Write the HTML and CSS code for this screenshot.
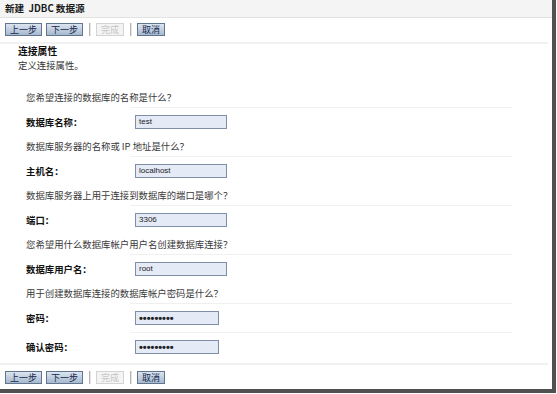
FILE: index.html
```html
<!DOCTYPE html>
<html lang="zh-CN">
<head>
<meta charset="utf-8">
<title>新建 JDBC 数据源</title>
<link rel="stylesheet" href="styles.css">
</head>
<body>
<div class="window">
  <div class="titlebar">新建&nbsp; JDBC 数据源</div>
  <div class="toolbar">
    <span class="btn">上一步</span>
    <span class="btn">下一步</span>
    <span class="sep"></span>
    <span class="btn disabled">完成</span>
    <span class="sep"></span>
    <span class="btn">取消</span>
  </div>
  <div class="section">
    <div class="heading">连接属性</div>
    <div class="desc">定义连接属性。</div>
  </div>
  <div class="form">
    <div class="q">您希望连接的数据库的名称是什么？</div>
    <div class="field"><span class="label">数据库名称：</span><span class="input">test</span></div>
    <div class="q">数据库服务器的名称或 IP 地址是什么？</div>
    <div class="field"><span class="label">主机名：</span><span class="input">localhost</span></div>
    <div class="q">数据库服务器上用于连接到数据库的端口是哪个？</div>
    <div class="field"><span class="label">端口：</span><span class="input">3306</span></div>
    <div class="q">您希望用什么数据库帐户用户名创建数据库连接？</div>
    <div class="field"><span class="label">数据库用户名：</span><span class="input">root</span></div>
    <div class="q">用于创建数据库连接的数据库帐户密码是什么？</div>
    <div class="field"><span class="label">密码：</span><span class="input pw">•••••••••</span></div>
    <div class="field last"><span class="label">确认密码：</span><span class="input pw">•••••••••</span></div>
  </div>
  <div class="toolbar bottom">
    <span class="btn">上一步</span>
    <span class="btn">下一步</span>
    <span class="sep"></span>
    <span class="btn disabled">完成</span>
    <span class="sep"></span>
    <span class="btn">取消</span>
  </div>
</div>
</body>
</html>
```
FILE: styles.css
```css
* { box-sizing: border-box; margin: 0; padding: 0; }
html, body { background: #fff; }
body {
  font-family: "Noto Sans CJK SC", "Noto Sans", sans-serif;
  font-size: 9.4px;
  color: #333;
}
.window {
  width: 556px;
  height: 393px;
  border-right: 4px solid #505050;
  border-bottom: 4px solid #505050;
  background: #fff;
  display: flex;
  flex-direction: column;
}
.titlebar {
  height: 18px;
  line-height: 17px;
  padding-left: 5px;
  background: #f4f4f4;
  border-bottom: 1px solid #e2e2e2;
  font-weight: bold;
  font-size: 9.6px;
  color: #1a1a1a;
  white-space: pre;
}
.toolbar {
  display: flex;
  align-items: flex-start;
  gap: 4px;
  width: 548px;
  height: 26px;
  padding: 5px 5px 0;
  border-bottom: 2px solid #f1f1f1;
}
.toolbar.bottom {
  border-bottom: none;
  border-top: 2px solid #f1f1f1;
  padding-top: 6px;
}
.btn {
  height: 13px;
  line-height: 11px;
  padding: 0 4px;
  border: 1px solid #62758e;
  background: linear-gradient(#dce5f0, #a6b8cf);
  color: #14284a;
  font-size: 9px;
}
.btn.disabled {
  border-color: #d4d4d4;
  background: #f4f4f4;
  color: #c6c6c6;
}
.sep {
  width: 2px;
  height: 13px;
  margin: 0 1px 0 2px;
  border-left: 1px solid #b4b4b4;
  border-right: 1px solid #e4e4e4;
}
.section { padding-left: 18px; }
.heading {
  line-height: 14px;
  font-weight: bold;
  font-size: 9.8px;
  color: #111;
}
.desc { line-height: 14px; color: #333; }
.form {
  margin-top: 15px;
  padding-left: 26px;
  width: 512px;
}
.q { height: 20px; line-height: 20px; color: #3a3a3a; }
.field {
  display: flex;
  align-items: center;
  padding: 8px 0 7px;
  background: linear-gradient(#f0f0f0, #f0f0f0) no-repeat 104px 0 / 382px 1px;
}
.field.last { padding-bottom: 9px; }
.label {
  width: 109px;
  font-weight: bold;
  color: #111;
}
.input {
  width: 92px;
  height: 14px;
  line-height: 12px;
  padding-left: 3px;
  border: 1px solid #7d8ea6;
  background: #e4ebf7;
  font-family: "Liberation Sans", Arial, sans-serif;
  font-size: 8px;
  color: #222;
}
.input.pw {
  width: 84px;
  font-size: 11px;
  font-weight: bold;
  letter-spacing: 0;
}
```
